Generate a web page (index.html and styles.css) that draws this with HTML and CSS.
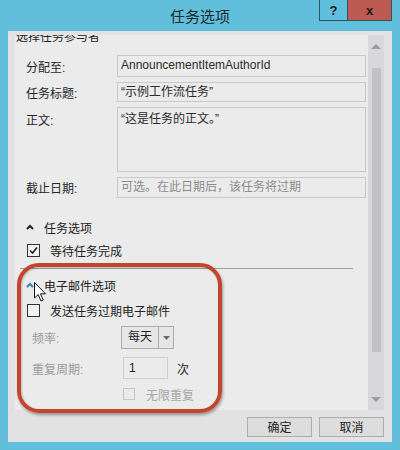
FILE: index.html
```html
<!DOCTYPE html>
<html>
<head>
<meta charset="utf-8">
<link rel="stylesheet" href="styles.css">
</head>
<body>
<div class="window">
  <div class="titlebar">
    <div class="title">任务选项</div>
    <div class="caption-btns">
      <div class="cbtn help">?</div>
      <div class="cbtn close">x</div>
    </div>
  </div>
  <div class="client">
    <div class="panel">
      <div class="content">
        <div class="clip-title"><span>选择任务参与者</span></div>
        <div class="form">
          <label class="lbl">分配至:</label>
          <div class="box">AnnouncementItemAuthorId</div>
          <label class="lbl">任务标题:</label>
          <div class="box">“示例工作流任务”</div>
          <label class="lbl top">正文:</label>
          <div class="box multi">“这是任务的正文。”</div>
          <label class="lbl">截止日期:</label>
          <div class="box placeholder">可选。在此日期后，该任务将过期</div>
        </div>
        <div class="section-head first">
          <svg class="chev" width="8" height="6" viewBox="0 0 8 6"><polyline points="1,5 4,2 7,5" fill="none" stroke="#222" stroke-width="2"/></svg>
          <span>任务选项</span>
        </div>
        <div class="check-row wait">
          <span class="cb"><svg width="11" height="11" viewBox="0 0 11 11"><polyline points="2,5.5 4.5,8 9,2.5" fill="none" stroke="#222" stroke-width="1.6"/></svg></span>
          <span class="cb-label">等待任务完成</span>
        </div>
        <div class="sep"></div>
        <div class="section-head second">
          <svg class="chev" width="8" height="6" viewBox="0 0 8 6"><polyline points="1,5 4,2 7,5" fill="none" stroke="#3d7fb5" stroke-width="2"/></svg>
          <span>电子邮件选项</span>
        </div>
        <div class="check-row send">
          <span class="cb"></span>
          <span class="cb-label">发送任务过期电子邮件</span>
        </div>
        <div class="sub-form">
          <label class="sub-lbl">频率:</label>
          <div class="combo"><span class="combo-text">每天</span><span class="combo-btn"><svg width="7" height="4" viewBox="0 0 7 4"><polygon points="0,0 7,0 3.5,4" fill="#6a6a6a"/></svg></span></div>
          <label class="sub-lbl">重复周期:</label>
          <div class="repeat"><div class="num">1</div><span class="unit">次</span></div>
          <span></span>
          <div class="check-row disabled">
            <span class="cb small"></span>
            <span class="cb-label">无限重复</span>
          </div>
        </div>
      </div>
      <div class="scrollbar">
        <div class="sb-btn"><svg width="10" height="5" viewBox="0 0 10 5"><polygon points="0,5 10,5 5,0" fill="#9c9ca0"/></svg></div>
        <div class="sb-track"><div class="thumb"></div></div>
        <div class="sb-btn"><svg width="10" height="5" viewBox="0 0 10 5"><polygon points="0,0 10,0 5,5" fill="#9c9ca0"/></svg></div>
      </div>
    </div>
    <div class="buttons">
      <button class="btn">确定</button>
      <button class="btn">取消</button>
    </div>
  </div>
  <div class="annotation"></div>
  <svg class="cursor" width="13" height="21" viewBox="0 0 13 21"><path d="M0.5,0.5 L0.5,16 L4.2,12.5 L7,19 L9.2,18 L6.5,11.8 L11.5,11.8 Z" fill="#fff" stroke="#111" stroke-width="1"/></svg>
</div>
</body>
</html>
```

FILE: styles.css
```css
* { box-sizing: border-box; }
html, body { margin: 0; padding: 0; }
body {
  width: 400px;
  height: 450px;
  overflow: hidden;
  background: #62bfdc;
  font-family: "Liberation Sans", "Noto Sans CJK SC", sans-serif;
  font-size: 12px;
  color: #222;
}
.window {
  position: relative;
  width: 400px;
  height: 450px;
  display: flex;
  flex-direction: column;
  background: #62bfdc;
}
.titlebar {
  position: relative;
  height: 31px;
  display: flex;
  align-items: center;
  justify-content: center;
}
.title {
  font-family: "Noto Sans CJK SC", sans-serif;
  font-size: 15px;
  color: #1d2a30;
  line-height: 20px;
}
.caption-btns {
  position: absolute;
  top: -1px;
  left: 319px;
  display: flex;
}
.cbtn {
  height: 22px;
  border: 1px solid #2f5563;
  display: flex;
  align-items: center;
  justify-content: center;
  font-family: "Liberation Sans", sans-serif;
  font-weight: bold;
  font-size: 13px;
  color: #1a1a1a;
}
.help { width: 28px; background: #62bfdc; border-right: none; }
.close { width: 45px; background: #bd5a52; }
.client {
  flex: 1;
  margin: 0 8px 8px 8px;
  background: #e2e2e2;
  padding: 4px 8px 5px 7px;
  display: flex;
  flex-direction: column;
}
.panel {
  height: 375px;
  display: flex;
  background: #ebebeb;
}
.content {
  flex: 1;
  overflow: hidden;
  padding: 0 2px 0 11px;
}
.clip-title {
  height: 20px;
  overflow: hidden;
  margin-left: -10px;
}
.clip-title span {
  display: block;
  line-height: 14px;
  margin-top: -5px;
}
.form {
  display: grid;
  grid-template-columns: 91px 1fr;
  grid-template-rows: 22px 20px 65px 21px;
  row-gap: 5px;
}
.lbl {
  align-self: center;
  color: #262626;
}
.lbl.top { align-self: start; padding-top: 4px; }
.box {
  border: 1px solid #c9c9c9;
  background: #ebebeb;
  padding: 0 3px;
  line-height: 19px;
  color: #2a2a2a;
  white-space: nowrap;
  overflow: hidden;
}
.box.multi { padding-top: 2px; }
.box.placeholder { color: #8c8c8c; }
.section-head {
  height: 20px;
  display: flex;
  align-items: center;
}
.section-head.first { margin-top: 19px; }
.section-head.second { margin-top: 6px; }
.chev { margin-right: 10px; }
.check-row {
  height: 20px;
  display: flex;
  align-items: center;
}
.check-row.wait { margin-top: 3px; }
.check-row.send { margin-top: 5px; }
.cb {
  width: 13px;
  height: 13px;
  margin-left: 1px;
  border: 1px solid #333;
  background: #f2f2f2;
  display: flex;
  align-items: center;
  justify-content: center;
}
.cb-label { margin-left: 10px; }
.sep {
  margin-top: 8px;
  margin-left: -6px;
  width: 333px;
  height: 1px;
  background: #9e9e9e;
}
.sub-form {
  margin-top: 6px;
  display: grid;
  grid-template-columns: 89px auto;
  grid-template-rows: 23px 22px 20px;
  row-gap: 8px;
  padding-left: 6px;
  justify-content: start;
}
.sub-form .check-row.disabled { margin-top: -3px; }
.sub-lbl {
  align-self: center;
  color: #9a9a9a;
}
.combo {
  width: 53px;
  height: 23px;
  border: 1px solid #acacac;
  background: #e6e6e6;
  display: flex;
}
.combo-text {
  width: 37px;
  padding-left: 6px;
  line-height: 21px;
  color: #1f1f1f;
  border-right: 1px solid #acacac;
}
.combo-btn {
  flex: 1;
  display: flex;
  align-items: center;
  justify-content: center;
}
.repeat { display: flex; align-items: center; }
.num {
  width: 45px;
  height: 22px;
  margin-left: 2px;
  border: 1px solid #cfcfcf;
  background: #ebebeb;
  padding-left: 5px;
  line-height: 20px;
  color: #222;
}
.unit { margin-left: 9px; }
.check-row.disabled .cb {
  width: 12px;
  height: 12px;
  margin-left: 2px;
  border-color: #c4c4c4;
  background: #ebebeb;
}
.check-row.disabled .cb-label { margin-left: 11px; color: #a6a6a6; }
.scrollbar {
  width: 16px;
  background: #d8d8dc;
  display: flex;
  flex-direction: column;
}
.sb-btn {
  height: 22px;
  display: flex;
  align-items: center;
  justify-content: center;
}
.sb-track { flex: 1; display: flex; justify-content: center; }
.thumb {
  width: 9px;
  height: 284px;
  margin-top: 11px;
  background: #c1c1c5;
}
.buttons {
  margin-top: 7px;
  display: flex;
  justify-content: flex-end;
  gap: 7px;
}
.btn {
  width: 65px;
  height: 20px;
  border: 1px solid #acacac;
  background: #dddddd;
  font-family: "Noto Sans CJK SC", sans-serif;
  font-size: 12px;
  color: #222;
  padding: 0;
  line-height: 18px;
}
.annotation {
  position: absolute;
  left: 17px;
  top: 263px;
  width: 205px;
  height: 150px;
  border: 4px solid #c4452d;
  border-radius: 22px;
  box-shadow: 1px 2px 3px rgba(0,0,0,0.35), inset 1px 1px 2px rgba(0,0,0,0.2);
  pointer-events: none;
}
.cursor {
  position: absolute;
  left: 34px;
  top: 282px;
}
```
